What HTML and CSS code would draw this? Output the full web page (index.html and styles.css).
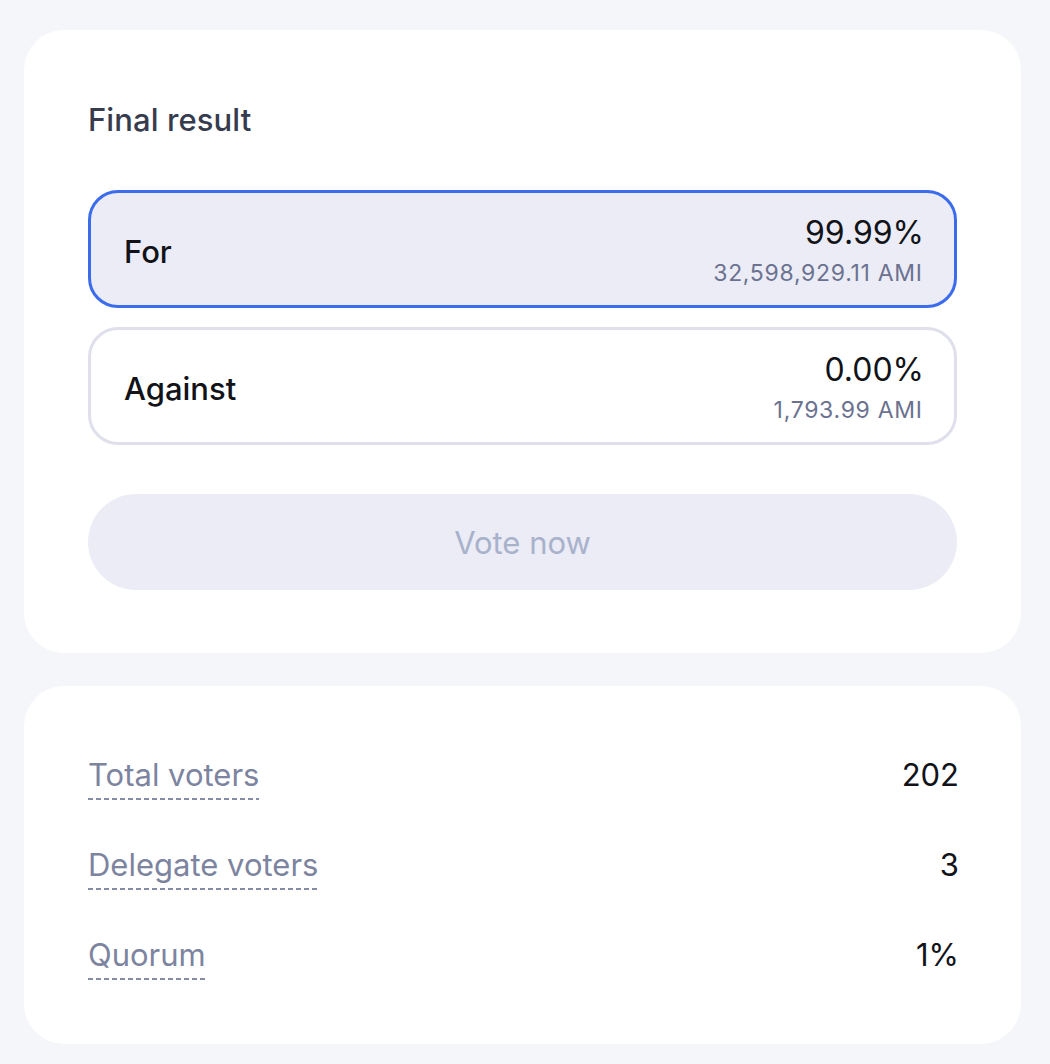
FILE: index.html
```html
<!DOCTYPE html>
<html lang="en">
<head>
<meta charset="utf-8">
<title>Final result</title>
<link rel="stylesheet" href="styles.css">
</head>
<body>
<main class="page">
  <section class="card result-card">
    <h2 class="title">Final result</h2>
    <div class="options">
      <div class="option selected">
        <span class="option-label">For</span>
        <div class="option-values">
          <span class="percent">99.99%</span>
          <span class="amount">32,598,929.11 AMI</span>
        </div>
      </div>
      <div class="option">
        <span class="option-label">Against</span>
        <div class="option-values">
          <span class="percent">0.00%</span>
          <span class="amount">1,793.99 AMI</span>
        </div>
      </div>
    </div>
    <button class="vote-btn" disabled>Vote now</button>
  </section>
  <section class="card stats-card">
    <div class="stat-row">
      <span class="stat-label">Total voters</span>
      <span class="stat-value">202</span>
    </div>
    <div class="stat-row">
      <span class="stat-label">Delegate voters</span>
      <span class="stat-value">3</span>
    </div>
    <div class="stat-row">
      <span class="stat-label">Quorum</span>
      <span class="stat-value">1%</span>
    </div>
  </section>
</main>
</body>
</html>
```
FILE: styles.css
```css
* { box-sizing: border-box; }
html, body {
  margin: 0;
  padding: 0;
  background: #f5f6fa;
}
body {
  font-family: Inter, "Noto Sans", sans-serif;
  color: #111318;
}
.page {
  padding: 30px 29px 0 24px;
  display: flex;
  flex-direction: column;
  gap: 33px;
}
.card {
  background: #ffffff;
  border-radius: 40px;
}
.result-card {
  padding: 72px 64px 63px 64px;
  height: 623px;
}
.title {
  margin: 0;
  font-size: 31px;
  font-weight: 500;
  line-height: 36px;
  color: #363b4e;
  letter-spacing: 0.1px;
}
.options {
  margin-top: 52px;
  display: flex;
  flex-direction: column;
  gap: 19px;
}
.option {
  height: 118px;
  border: 3px solid #dfe0eb;
  border-radius: 30px;
  background: #ffffff;
  display: flex;
  align-items: center;
  justify-content: space-between;
  padding: 0 32px 0 33px;
}
.option.selected {
  border-color: #3a6cec;
  background: #ebecf6;
}
.option-label {
  font-size: 31px;
  font-weight: 500;
  line-height: 36px;
  color: #111318;
  padding-top: 5px;
}
.option-values {
  display: flex;
  flex-direction: column;
  align-items: flex-end;
  gap: 8px;
  padding-top: 3px;
}
.percent {
  font-size: 32px;
  line-height: 36px;
  color: #111318;
  margin-right: -2px;
}
.amount {
  font-size: 23px;
  line-height: 28px;
  letter-spacing: 0.7px;
  margin-right: -0.7px;
  color: #6b7290;
}
.vote-btn {
  display: block;
  width: 100%;
  margin-top: 49px;
  height: 96px;
  border: none;
  border-radius: 48px;
  background: #ebecf5;
  color: #a8b2cb;
  font-family: Inter, "Noto Sans", sans-serif;
  font-size: 31px;
  font-weight: 400;
  padding: 0;
  cursor: default;
}
.stats-card {
  padding: 71px 64px 64px 64px;
  display: flex;
  flex-direction: column;
  gap: 47px;
}
.stat-row {
  display: flex;
  justify-content: space-between;
  align-items: flex-start;
}
.stat-label {
  font-size: 31px;
  line-height: 36px;
  color: #7d84a0;
  padding-bottom: 7px;
  background-image: linear-gradient(to right, #858ca4 5px, transparent 5px);
  background-size: 8px 2px;
  background-repeat: repeat-x;
  background-position: left bottom;
}
.stat-value {
  font-size: 31px;
  line-height: 36px;
  color: #111318;
  margin-right: -2px;
}
```
